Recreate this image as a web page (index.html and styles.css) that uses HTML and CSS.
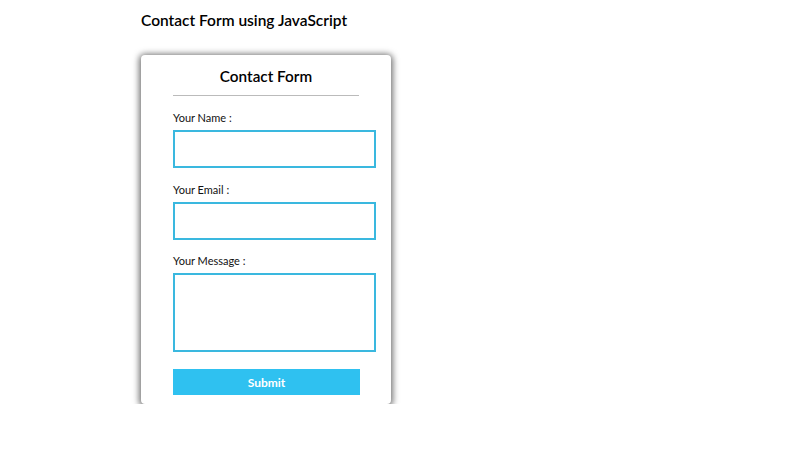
FILE: index.html
```html
<!DOCTYPE html>
<html>
<head>
<meta charset="utf-8">
<link rel="stylesheet" href="styles.css">
</head>
<body>
<div class="page">
  <h1 class="page-title">Contact Form using JavaScript</h1>
  <form class="card">
    <h2 class="card-title">Contact Form</h2>
    <hr class="divider">
    <label class="label">Your Name :</label>
    <input class="field" type="text">
    <label class="label">Your Email :</label>
    <input class="field" type="text">
    <label class="label">Your Message :</label>
    <textarea class="field area"></textarea>
    <button class="submit" type="button">Submit</button>
  </form>
</div>
</body>
</html>
```
FILE: styles.css
```css
html, body {
  margin: 0;
  padding: 0;
  background: #ffffff;
}
body {
  font-family: Lato, "Noto Sans", sans-serif;
  color: #111;
}
.page {
  padding: 9px 0 0 141px;
}
.page-title {
  margin: 0;
  font-size: 15.5px;
  font-weight: 600;
  line-height: 22px;
  color: #000;
}
.card {
  box-sizing: border-box;
  width: 250px;
  margin-top: 24px;
  padding: 9px 32px 9px 32px;
  background: #fff;
  border-radius: 4px;
  box-shadow: 0 1px 6px 2px rgba(0,0,0,0.55);
  display: flex;
  flex-direction: column;
  align-items: flex-start;
}
.card-title {
  align-self: stretch;
  margin: 0;
  font-size: 15.3px;
  font-weight: 600;
  line-height: 24px;
  text-align: center;
  color: #000;
}
.divider {
  box-sizing: border-box;
  width: 186px;
  margin: 7px 0 14px 0;
  border: 0;
  border-top: 1px solid #bbb;
  height: 0;
}
.label {
  font-size: 11px;
  line-height: 16px;
  color: #111;
}
.field {
  box-sizing: border-box;
  width: 203px;
  height: 38px;
  margin: 4px 0 13.5px 0;
  border: 2px solid #3ab8df;
  padding: 0;
  font: inherit;
  resize: none;
  outline: none;
  display: block;
}
.area {
  height: 79px;
  margin-bottom: 17px;
}
.submit {
  box-sizing: border-box;
  width: 187px;
  height: 26px;
  border: 0;
  background: #2fc1f0;
  color: #fff;
  font-family: inherit;
  font-size: 12px;
  font-weight: 700;
  padding: 0;
}
```
